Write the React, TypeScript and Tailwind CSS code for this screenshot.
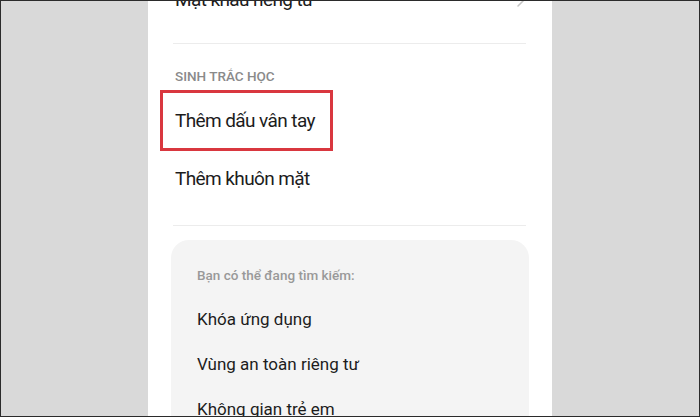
const font = { fontFamily: "Roboto, 'Noto Sans', sans-serif" };

function Divider() {
  return <div className="ml-[25px] mr-[26px] h-px bg-[#ececec]" />;
}

export default function App() {
  const suggestions = ["Khóa ứng dụng", "Vùng an toàn riêng tư", "Không gian trẻ em"];

  return (
    <div
      className="flex h-[417px] w-[700px] overflow-hidden border border-[#2b2b2b] bg-[#d9d9d9]"
      style={font}
    >
      <div className="w-[147px] shrink-0" />

      <div className="w-[404px] shrink-0 overflow-hidden bg-white">
        {/* row cut off at the top */}
        <div className="mt-[-19px] flex h-[36px] items-center justify-between pl-[27px] pr-[26px]">
          <span className="text-[19px] leading-[24px] tracking-[-0.6px] text-[#1c1c1c]">
            Mật khẩu riêng tư
          </span>
          <svg width="10" height="16" viewBox="0 0 10 16" fill="none">
            <path d="M2 2l6 6-6 6" stroke="#c4c4c4" strokeWidth="1.5" strokeLinecap="round" />
          </svg>
        </div>

        <div className="mt-[25px]">
          <Divider />
        </div>

        <p className="mt-[24px] pl-[27px] text-[13.5px] font-medium leading-[16px] text-[#8a8a8a]">
          SINH TRẮC HỌC
        </p>

        <div className="ml-[12px] mt-[6px] flex h-[61px] w-[173px] items-center border-[3px] border-[#d9373f] pl-[12px]">
          <span className="text-[19px] leading-[24px] tracking-[-0.6px] text-[#1c1c1c]">
            Thêm dấu vân tay
          </span>
        </div>

        <p className="mt-[16px] pl-[27px] text-[19px] leading-[24px] tracking-[-0.6px] text-[#1c1c1c]">
          Thêm khuôn mặt
        </p>

        <div className="mt-[34px]">
          <Divider />
        </div>

        <div className="ml-[23px] mr-[23px] mt-[14px] h-[200px] rounded-[18px] bg-[#f4f4f4] pl-[26px] pt-[27px]">
          <p className="text-[13.5px] font-medium leading-[16px] text-[#999999]">
            Bạn có thể đang tìm kiếm:
          </p>
          <div className="mt-[24px] flex flex-col gap-[21px]">
            {suggestions.map((s) => (
              <p key={s} className="text-[17px] leading-[24px] text-[#1c1c1c]">
                {s}
              </p>
            ))}
          </div>
        </div>
      </div>

      <div className="flex-1" />
    </div>
  );
}
